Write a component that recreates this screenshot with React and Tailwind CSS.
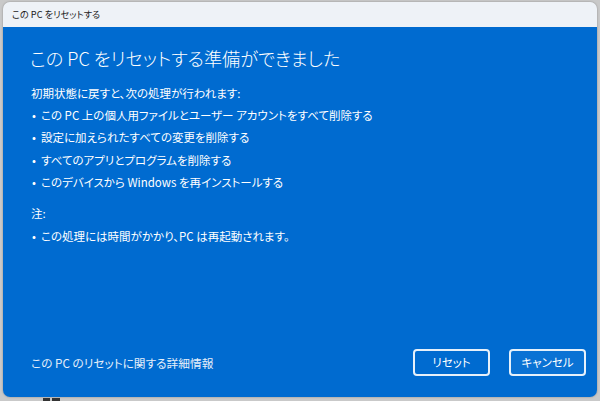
export default function App() {
  const font = { fontFamily: '"Noto Sans CJK JP", "Noto Sans", sans-serif' };
  const bullets = [
    "この PC 上の個人用ファイルとユーザー アカウントをすべて削除する",
    "設定に加えられたすべての変更を削除する",
    "すべてのアプリとプログラムを削除する",
    "このデバイスから Windows を再インストールする",
  ];
  return (
    <div
      className="relative w-[600px] h-[401px] overflow-hidden bg-[#c9c9c9] pt-[2px] px-[3px] [font-feature-settings:'palt']"
      style={font}
    >
      <div className="flex flex-col h-[395px] rounded-[7px] overflow-hidden shadow-[0_0_2px_rgba(0,0,0,0.35)]">
        <div className="h-[25px] shrink-0 bg-[#eef2f7] flex items-center pl-[9px] text-[9.2px] text-[#1b1b1b]">
          この PC をリセットする
        </div>
        <div className="flex-1 flex flex-col bg-[#006bd0] text-white pl-[27px] pr-[11px] pt-[17px] pb-[21px]">
          <h1 className="text-[18.2px] leading-[28px] font-light">この PC をリセットする準備ができました</h1>
          <p className="mt-[10px] text-[11.5px] leading-[22px] pl-[1px]">初期状態に戻すと、次の処理が行われます:</p>
          <ul className="text-[11.5px] leading-[22.3px]">
            {bullets.map((b) => (
              <li key={b} className="flex items-center">
                <span className="w-[11px] pl-[2px]">•</span>
                <span>{b}</span>
              </li>
            ))}
          </ul>
          <p className="mt-[9px] text-[11.5px] leading-[22px] pl-[1px]">注:</p>
          <ul className="mt-[1px] text-[11.5px] leading-[22px]">
            <li className="flex items-center">
              <span className="w-[11px] pl-[2px]">•</span>
              <span>この処理には時間がかかり、PC は再起動されます。</span>
            </li>
          </ul>
          <div className="mt-auto flex items-center">
            <span className="pl-[1px] text-[11.7px] text-[#e6effa]">この PC のリセットに関する詳細情報</span>
            <div className="ml-auto flex gap-[19px]">
              <button className="w-[77px] h-[27px] rounded-[4px] border-2 border-white/90 text-[11.5px] text-white bg-transparent">
                リセット
              </button>
              <button className="w-[77px] h-[27px] rounded-[4px] border-2 border-white/90 text-[11.5px] text-white bg-[#0a72d4]">
                キャンセル
              </button>
            </div>
          </div>
        </div>
      </div>
      <div className="absolute left-[43px] top-[398px] flex gap-[2px]">
        <div className="w-[7px] h-[3px] bg-[#333]"></div>
        <div className="w-[8px] h-[3px] bg-[#333]"></div>
      </div>
    </div>
  );
}
